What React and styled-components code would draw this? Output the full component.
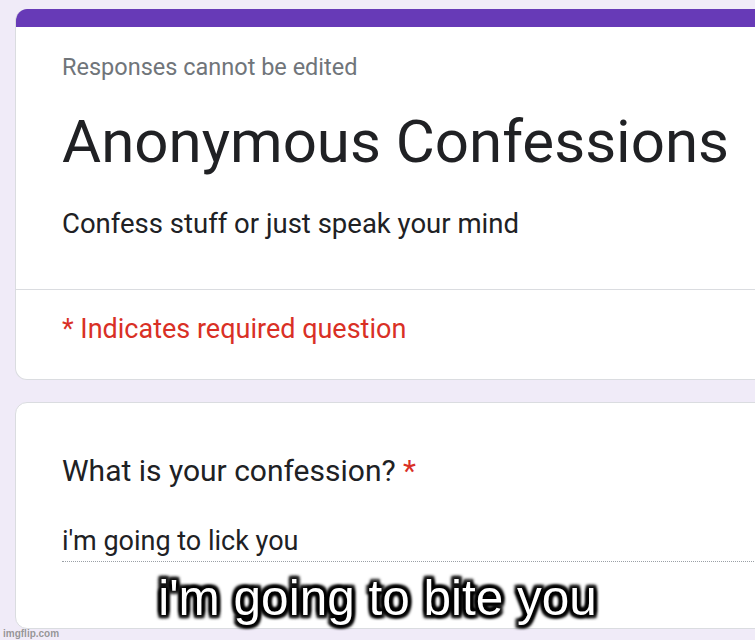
import React from 'react';
import styled, { createGlobalStyle } from 'styled-components';

const GlobalStyle = createGlobalStyle`
  html, body {
    margin: 0;
    padding: 0;
    background: #f0ebf8;
    overflow: hidden;
  }
  body {
    font-family: Roboto, "Liberation Sans", Arial, sans-serif;
  }
`;

const App = () => {
  return (
    <Page>
      <GlobalStyle />
      <HeaderCard>
        <TopBar />
        <HeaderBody>
          <Notice>Responses cannot be edited</Notice>
          <Title>Anonymous Confessions</Title>
          <Description>Confess stuff or just speak your mind</Description>
        </HeaderBody>
        <Divider />
        <Required>* Indicates required question</Required>
      </HeaderCard>
      <QuestionCard>
        <Question>
          What is your confession? <Star>*</Star>
        </Question>
        <Answer>i'm going to lick you</Answer>
      </QuestionCard>
      <Caption>i'm going to bite you</Caption>
      <Watermark>imgflip.com</Watermark>
    </Page>
  );
};

const Page = styled.div`
  position: relative;
  width: 755px;
  height: 640px;
  overflow: hidden;
  background: #f0ebf8;
  padding: 9px 0 0 15px;
  box-sizing: border-box;
  display: flex;
  flex-direction: column;
  gap: 22px;
`;

const Card = styled.div`
  width: 820px;
  background: #fff;
  border: 1px solid #dadce0;
  border-radius: 12px;
  box-sizing: border-box;
  overflow: hidden;
`;

const HeaderCard = styled(Card)`
  height: 371px;
  border-top: none;
`;

const TopBar = styled.div`
  height: 18px;
  background: #673ab7;
`;

const HeaderBody = styled.div`
  padding: 26px 0 0 46px;
  height: 262px;
  box-sizing: border-box;
`;

const Notice = styled.div`
  font-size: 23.5px;
  color: #70757a;
  line-height: 28px;
`;

const Title = styled.div`
  font-size: 60px;
  color: #202124;
  line-height: 70px;
  margin-top: 26px;
`;

const Description = styled.div`
  font-size: 27.5px;
  color: #202124;
  line-height: 32px;
  margin-top: 31px;
`;

const Divider = styled.div`
  height: 1px;
  background: #dadce0;
`;

const Required = styled.div`
  font-size: 27px;
  color: #d93025;
  padding: 23px 0 0 46px;
  line-height: 32px;
`;

const QuestionCard = styled(Card)`
  height: 227px;
  padding: 50px 0 0 46px;
`;

const Question = styled.div`
  font-size: 30px;
  color: #202124;
  line-height: 36px;
`;

const Star = styled.span`
  color: #d93025;
`;

const Answer = styled.div`
  margin-top: 36px;
  font-size: 27px;
  color: #202124;
  line-height: 32px;
  padding-bottom: 4px;
  border-bottom: 1px dotted #9aa0a6;
`;

const Caption = styled.div`
  position: absolute;
  left: 0;
  right: 0;
  top: 570px;
  text-align: center;
  font-family: "Liberation Sans", Arial, sans-serif;
  font-size: 49.5px;
  line-height: 56px;
  color: #fff;
  text-shadow:
    3px 3px 3px #000, -3px -3px 3px #000, 3px -3px 3px #000, -3px 3px 3px #000,
    0 3px 3px #000, 0 -3px 3px #000, 3px 0 3px #000, -3px 0 3px #000,
    0 0 2px #000;
`;

const Watermark = styled.div`
  position: absolute;
  left: 3px;
  bottom: 1px;
  font-family: "Liberation Sans", Arial, sans-serif;
  font-weight: bold;
  font-size: 10px;
  color: rgba(140, 140, 140, 0.9);
`;

export default App;
